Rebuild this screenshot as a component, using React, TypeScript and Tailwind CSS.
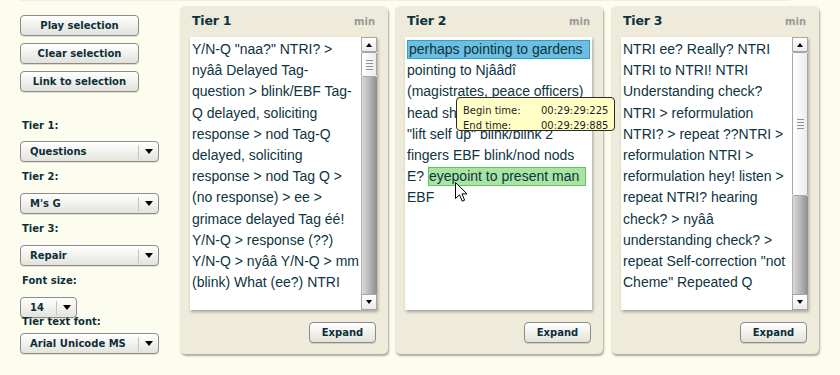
import React from 'react';

const tier1Lines = [
  'Y/N-Q "naa?" NTRI? >',
  'nyââ Delayed Tag-',
  'question > blink/EBF Tag-',
  'Q delayed, soliciting',
  'response > nod Tag-Q',
  'delayed, soliciting',
  'response > nod Tag Q >',
  '(no response) > ee >',
  'grimace delayed Tag éé!',
  'Y/N-Q > response (??)',
  'Y/N-Q > nyââ Y/N-Q > mm',
  '(blink) What (ee?) NTRI',
];

const tier3Lines = [
  'NTRI ee? Really? NTRI',
  'NTRI to NTRI! NTRI',
  'Understanding check?',
  'NTRI > reformulation',
  'NTRI? > repeat ??NTRI >',
  'reformulation NTRI >',
  'reformulation hey! listen >',
  'repeat NTRI? hearing',
  'check? > nyââ',
  'understanding check? >',
  'repeat Self-correction "not',
  'Cheme" Repeated Q',
];

// small black triangle used in scroll arrows and selects
const Tri = ({ up, size = 'sm' }: { up?: boolean; size?: 'sm' | 'md' }) => {
  if (size === 'md') {
    return <span className="block h-0 w-0 border-x-[4px] border-t-[5px] border-x-transparent border-t-black" />;
  }
  return up ? (
    <span className="block h-0 w-0 border-x-[3px] border-b-[4px] border-x-transparent border-b-black" />
  ) : (
    <span className="block h-0 w-0 border-x-[3px] border-t-[4px] border-x-transparent border-t-black" />
  );
};

const Btn = ({ children, className = '' }: { children: React.ReactNode; className?: string }) => (
  <div
    className={`flex h-[21px] items-center justify-center rounded-[4px] border border-[#8c8c8c] bg-linear-to-b from-white to-[#e2e2da] text-[10px] font-bold text-[#0d2f3a] shadow-[0_1px_0_rgba(0,0,0,0.12)] ${className}`}
  >
    {children}
  </div>
);

const Select = ({ value, small }: { value: string; small?: boolean }) => (
  <div
    className={`flex h-[21px] items-center rounded-[4px] border border-[#8c8c8c] bg-linear-to-b from-white to-[#e4e4dc] shadow-[0_1px_0_rgba(0,0,0,0.12)] ${
      small ? 'w-[57px]' : 'w-[139px]'
    }`}
  >
    <span className="flex-1 pl-[9px] text-[10px] font-bold text-[#0d2f3a]">{value}</span>
    <span className="h-[14px] w-px bg-[#c4c4bc]" />
    <span className="flex w-[19px] justify-center">
      <Tri size="md" />
    </span>
  </div>
);

const Label = ({ children, className = '' }: { children: React.ReactNode; className?: string }) => (
  <div className={`relative pl-[2px] text-[10px] font-bold leading-[14px] text-[#0d2f3a] ${className}`}>{children}</div>
);

const ScrollBar = ({ thumb }: { thumb: string }) => (
  <div className="flex w-[16px] flex-col">
    <div className="flex h-[15px] items-center justify-center border border-[#a6a6a6] bg-linear-to-b from-white to-[#ebebeb]">
      <Tri up />
    </div>
    <div
      className={`flex flex-col items-center justify-center gap-[2px] rounded-[2px] border border-[#a6a6a6] bg-linear-to-r from-white to-[#ececec] ${thumb}`}
    >
      <span className="h-px w-[7px] bg-[#909090]" />
      <span className="h-px w-[7px] bg-[#909090]" />
      <span className="h-px w-[7px] bg-[#909090]" />
      <span className="h-px w-[7px] bg-[#909090]" />
    </div>
    <div className="flex-1 border-l border-[#b4b4b4] bg-linear-to-r from-[#dadada] via-[#b6b6b6] to-[#8e8e8e]" />
    <div className="flex h-[16px] items-center justify-center border border-[#a6a6a6] bg-linear-to-b from-white to-[#ebebeb]">
      <Tri />
    </div>
  </div>
);

const Panel = ({
  title,
  children,
  scroll,
  className = '',
}: {
  title: string;
  children: React.ReactNode;
  scroll?: React.ReactNode;
  className?: string;
}) => (
  <div
    className={`flex h-[348px] w-[208px] flex-col rounded-[5px] bg-[#efebdb] pl-[10px] pr-[11px] shadow-[1px_2px_2px_rgba(70,70,50,0.45)] ${className}`}
  >
    <div className="flex h-[31px] items-center justify-between px-[2px]">
      <span className="text-[12.5px] font-bold tracking-[-0.2px] text-[#0c3440]">{title}</span>
      <span className="text-[10px] font-bold text-[#9a9a9a]">min</span>
    </div>
    <div className="flex h-[273px] bg-white shadow-[1px_2px_3px_rgba(0,0,0,0.3)]">
      <div className="min-w-0 flex-1 overflow-hidden pl-[2px] pt-[2px] font-['Liberation_Sans',Arial,sans-serif] text-[14px] leading-[21px] text-[#0d3441]">
        {children}
      </div>
      {scroll}
    </div>
    <div className="mt-[12px] flex justify-end pr-[1px]">
      <Btn className="w-[67px]">Expand</Btn>
    </div>
  </div>
);

const Lines = ({ lines }: { lines: string[] }) => (
  <>
    {lines.map((l, i) => (
      <div key={i} className="h-[21.2px] whitespace-pre">
        {l}
      </div>
    ))}
  </>
);

export default function App() {
  return (
    <div className="relative h-[375px] w-[840px] overflow-hidden bg-[#fdfdef] font-['DejaVu_Sans',Verdana,sans-serif]">
      <div className="ml-[20px] h-px w-[770px] bg-[#efefe4]" />
      <div className="flex">
        {/* controls column */}
        <div className="flex w-[180px] flex-col pl-[20px] pt-[14px]">
          <Btn className="w-[119px]">Play selection</Btn>
          <Btn className="mt-[7px] w-[119px]">Clear selection</Btn>
          <Btn className="mt-[7px] w-[119px]">Link to selection</Btn>
          <Label className="mt-[27px]">Tier 1:</Label>
          <div className="mt-[8px]">
            <Select value="Questions" />
          </div>
          <Label className="mt-[8px]">Tier 2:</Label>
          <div className="mt-[9px]">
            <Select value="M's G" />
          </div>
          <Label className="mt-[8px]">Tier 3:</Label>
          <div className="mt-[9px]">
            <Select value="Repair" />
          </div>
          <Label className="mt-[8px]">Font size:</Label>
          <div className="mt-[9px]">
            <Select value="14" small />
          </div>
          <Label className="mt-[-3px]">Tier text font:</Label>
          <div className="mt-[4px]">
            <Select value="Arial Unicode MS" />
          </div>
        </div>

        {/* tiers */}
        <div className="flex gap-[7px] pt-[5px]">
          <Panel title="Tier 1" scroll={<ScrollBar thumb="h-[25px]" />}>
            <Lines lines={tier1Lines} />
          </Panel>
          <Panel title="Tier 2">
            <div className="flex h-[21.2px] items-center whitespace-pre">
              <span className="flex h-[19px] w-[183px] items-center border border-[#2f9fd0] bg-[#6cbfe0] pl-px">
                perhaps pointing to gardens
              </span>
            </div>
            <div className="h-[21.2px] whitespace-pre">pointing to Njââdî</div>
            <div className="h-[21.2px] whitespace-pre">(magistrates, peace officers)</div>
            <div className="h-[21.2px] whitespace-pre">head shakes no</div>
            <div className="h-[21.2px] whitespace-pre">"lift self up" blink/blink 2</div>
            <div className="h-[21.2px] whitespace-pre">fingers EBF blink/nod nods</div>
            <div className="flex h-[21.2px] items-center whitespace-pre">
              <span>E? </span>
              <span className="flex h-[19px] w-[158px] items-center border border-[#5cc65c] bg-[#aae4a2]">
                eyepoint to present man
              </span>
            </div>
            <div className="h-[21.2px] whitespace-pre">EBF</div>
          </Panel>
          <Panel title="Tier 3" className="ml-[1px]" scroll={<ScrollBar thumb="h-[144px]" />}>
            <Lines lines={tier3Lines} />
          </Panel>
        </div>
      </div>

      {/* time tooltip */}
      <div className="absolute left-[456px] top-[97px] h-[34px] w-[159px] rounded-[4px] border border-[#2a2a2a] bg-[#fefec6] pl-[6px] pt-[5px] text-[10px] leading-[15px] text-[#1e1e1e]">
        <div className="grid grid-cols-[78px_auto]">
          <span>Begin time:</span>
          <span>00:29:29:225</span>
          <span>End time:</span>
          <span>00:29:29:885</span>
        </div>
      </div>

      {/* mouse pointer */}
      <svg className="absolute left-[455px] top-[182px]" width="13" height="21" viewBox="0 0 13 21">
        <path
          d="M0.5 0.5 L0.5 16.5 L4.5 12.8 L7.2 19.2 L9.6 18.2 L7 11.9 L12 11.9 Z"
          fill="white"
          stroke="black"
          strokeWidth="1"
          strokeLinejoin="miter"
        />
      </svg>
    </div>
  );
}
